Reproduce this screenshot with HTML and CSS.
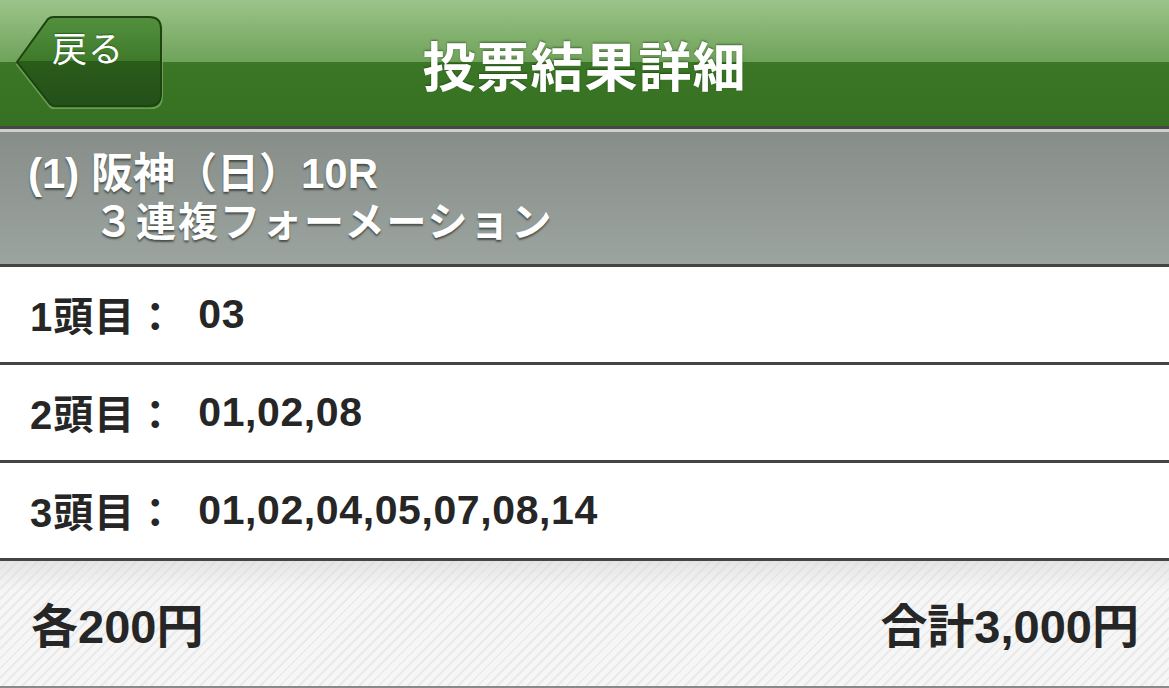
FILE: index.html
```html
<!DOCTYPE html>
<html lang="ja">
<head>
<meta charset="utf-8">
<title>投票結果詳細</title>
<link rel="stylesheet" href="styles.css">
</head>
<body>
<div class="page">
  <header class="navbar">
    <a class="back" href="#">
      <svg class="back-bg" width="152" height="94" viewBox="0 0 152 94">
        <defs>
          <linearGradient id="bg" x1="0" y1="0" x2="0" y2="1">
            <stop offset="0" stop-color="#52903e"/>
            <stop offset="0.5" stop-color="#3f7a2b"/>
            <stop offset="0.5" stop-color="#2a5c1a"/>
            <stop offset="1" stop-color="#23501a"/>
          </linearGradient>
        </defs>
        <path d="M5,48 L36,5 Q38,3 42,3 L138,3 Q150,3 150,15 L150,80 Q150,92 138,92 L43,92 Q40,92 38,90 Z" fill="none" stroke="#7fb068" stroke-opacity="0.7" stroke-width="2" transform="translate(0,1.5)"/>
        <path d="M5,47 L36,4 Q38,2 42,2 L137,2 Q149,2 149,14 L149,79 Q149,91 137,91 L43,91 Q40,91 38,89 Z" fill="url(#bg)" stroke="#1d4410" stroke-width="2"/>
      </svg>
      <span class="back-label">戻る</span>
    </a>
    <h1 class="title">投票結果詳細</h1>
  </header>

  <section class="race">
    <div class="race-line race-name">(1) 阪神（日）10R</div>
    <div class="race-line race-type">３連複フォーメーション</div>
  </section>

  <ul class="rows">
    <li class="row"><span class="label">1頭目：</span><span class="value">03</span></li>
    <li class="row"><span class="label">2頭目：</span><span class="value">01,02,08</span></li>
    <li class="row"><span class="label">3頭目：</span><span class="value">01,02,04,05,07,08,14</span></li>
  </ul>

  <footer class="summary">
    <span class="each">各200円</span>
    <span class="total">合計3,000円</span>
  </footer>
</div>
</body>
</html>
```

FILE: styles.css
```css
* { box-sizing: border-box; }

html, body {
  margin: 0;
  padding: 0;
  background: #ffffff;
}

body {
  font-family: "Liberation Sans", "Noto Sans CJK JP", sans-serif;
  font-weight: bold;
}

.page {
  width: 1169px;
  height: 688px;
  overflow: hidden;
  display: flex;
  flex-direction: column;
}

/* ---------- navbar ---------- */
.navbar {
  position: relative;
  height: 129px;
  flex: none;
  display: flex;
  align-items: center;
  justify-content: center;
  border-bottom: 3px solid #474747;
  background: linear-gradient(to bottom,
    #9cc48a 0px,
    #86b472 30px,
    #6fa25a 62px,
    #3b7726 62px,
    #367022 126px);
}

.title {
  margin: 0;
  margin-top: 2px;
  font-size: 53px;
  line-height: 1;
  font-weight: bold;
  color: #ffffff;
  font-family: "Noto Sans CJK JP", sans-serif;
  text-shadow: 0 -1px 2px rgba(20, 50, 10, 0.55);
  letter-spacing: 1px;
}

.back {
  position: absolute;
  left: 12px;
  top: 15px;
  width: 152px;
  height: 94px;
  text-decoration: none;
}

.back-bg {
  position: absolute;
  left: 0;
  top: 0;
  display: block;
}

.back-label {
  position: absolute;
  left: 40px;
  top: 10px;
  font-family: "Noto Sans CJK JP", sans-serif;
  font-weight: normal;
  font-size: 35px;
  line-height: 44px;
  color: #ffffff;
  letter-spacing: 1px;
  text-shadow: 0 -1px 1px rgba(0, 40, 0, 0.4);
}

/* ---------- race info ---------- */
.race {
  flex: none;
  height: 138px;
  border-top: 3px solid #ccd1cc;
  border-bottom: 3px solid #454545;
  background: linear-gradient(to bottom, #878e89, #9ca49f);
  padding: 17px 28px 0 28px;
  color: #ffffff;
}

.race-line {
  font-size: 40px;
  line-height: 49px;
  text-shadow: 0 2px 2px rgba(40, 45, 40, 0.7);
  white-space: nowrap;
}

.race-name {
  font-size: 42px;
}

.race-type {
  padding-left: 66px;
  letter-spacing: 2px;
}

/* ---------- rows ---------- */
.rows {
  list-style: none;
  margin: 0;
  padding: 0;
  flex: none;
}

.row {
  height: 98px;
  border-bottom: 3px solid #444444;
  display: flex;
  align-items: center;
  padding-left: 30px;
  padding-bottom: 1px;
  font-size: 40px;
  color: #262626;
  white-space: nowrap;
}

.row .label {
  letter-spacing: 1px;
}

.row .value {
  margin-left: 22px;
  font-size: 41px;
  letter-spacing: 0.6px;
}

/* ---------- summary ---------- */
.summary {
  flex: 1;
  display: flex;
  align-items: center;
  justify-content: space-between;
  padding: 0 30px 2px 31px;
  font-size: 47px;
  color: #262626;
  border-bottom: 2px solid #8a8a8a;
  background:
    linear-gradient(to bottom, rgba(215, 215, 215, 0.55) 0px, rgba(235, 235, 235, 0) 30px),
    repeating-linear-gradient(135deg, #f6f6f6 0px, #f6f6f6 5px, #eaeaea 5px, #eaeaea 7px);
}
```
